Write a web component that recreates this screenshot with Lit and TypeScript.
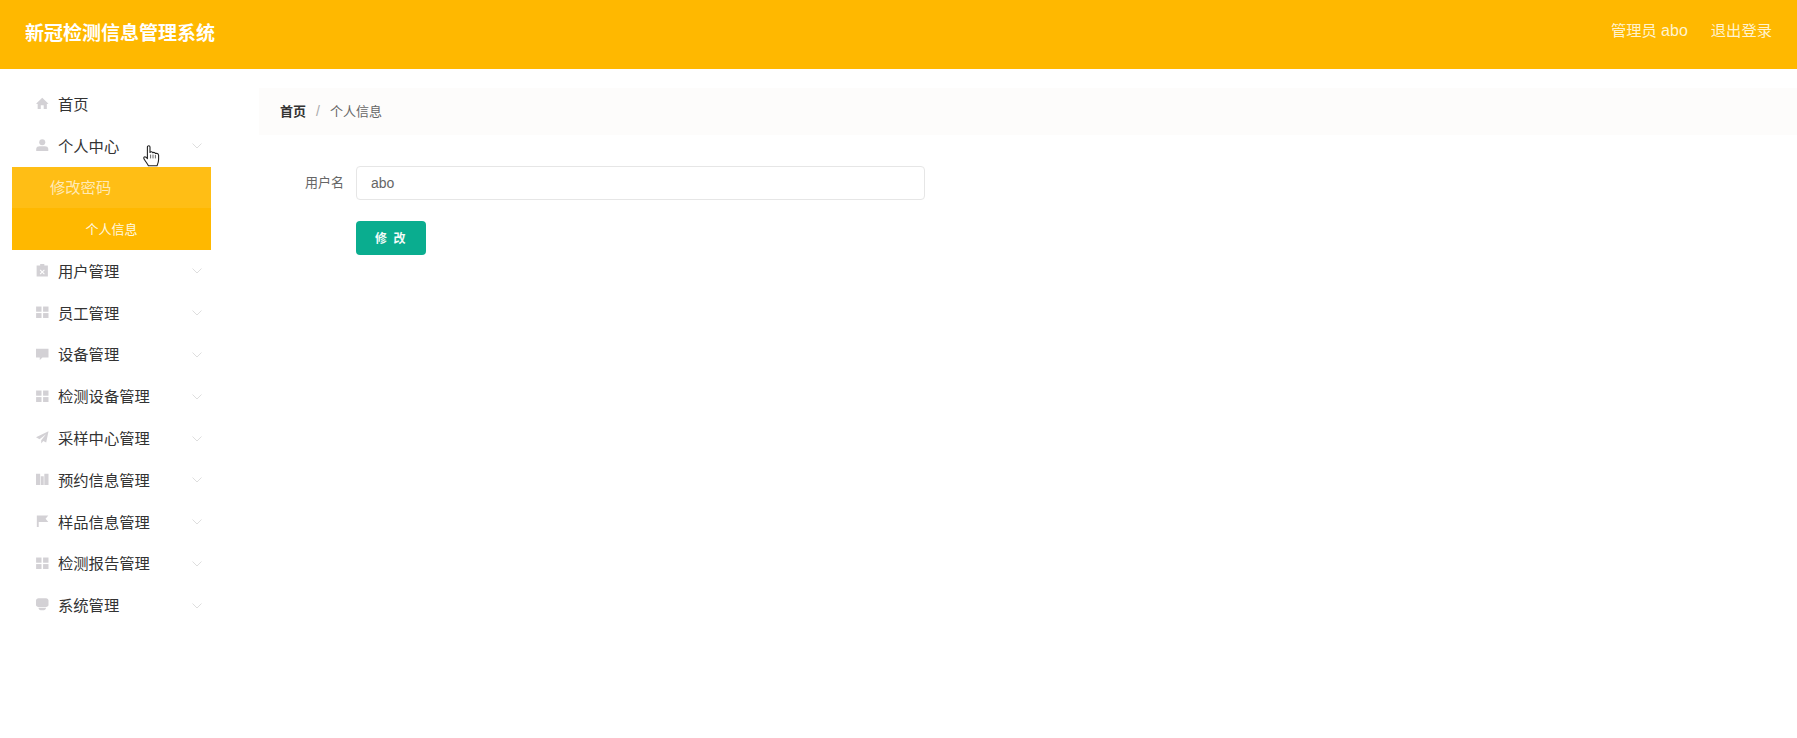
import { LitElement, html, css, svg } from "lit";
import { customElement } from "lit/decorators.js";

const icons: Record<string, unknown> = {
  home: svg`<path d="M6 .6 0 6.4 1.6 6.6V11.6H4.6V7.8H7.4V11.6H10.4V6.6L12 6.4Z"/>`,
  user: svg`<circle cx="6" cy="3.2" r="2.9"/><path d="M.2 11.8V9.6C.2 7.6 2 6.9 3.4 6.9H8.6C10 6.9 11.8 7.6 11.8 9.6V11.8Z"/>`,
  clip: svg`<path fill-rule="evenodd" d="M4 0H8V1.5H11.4V12H.6V1.5H4ZM4.3 5.2 3.6 5.9 5.3 7.6 3.6 9.3 4.3 10 6 8.3 7.7 10 8.4 9.3 6.7 7.6 8.4 5.9 7.7 5.2 6 6.9Z"/>`,
  grid: svg`<rect x=".1" y=".5" width="5.2" height="5"/><rect x="6.8" y=".5" width="5.2" height="5"/><rect x=".1" y="6.8" width="5.2" height="5"/><rect x="6.8" y="6.8" width="5.2" height="5"/>`,
  chat: svg`<path d="M0 .8H12V9H6.2L3.6 11.6V9H0Z"/>`,
  send: svg`<path d="M12 .2 0 6 3.4 7.8 9.6 3 5 8.8V12L7 9.6 9.8 11Z"/>`,
  chart: svg`<path d="M0 .6H4V11.6H0ZM4.6 3H7.4V11.6H4.6ZM8 .6H12V11.6H8Z"/>`,
  flag: svg`<path d="M.8 .4H11.8L9.2 3.6 11.8 6.8H2.6V12H.8Z"/>`,
  server: svg`<path d="M2.4 .2H9.6C11 .2 12 1.2 12 2.4V6.8C12 7.8 11 8.6 9.6 8.6H2.4C1 8.6 0 7.8 0 6.8V2.4C0 1.2 1 .2 2.4 .2ZM2.4 9.4H9.6C9.6 10.8 8.6 11.8 7.4 11.8H4.6C3.4 11.8 2.4 10.8 2.4 9.4Z"/>`,
};

const menu: [string, string, boolean][] = [
  ["home", "首页", false],
  ["user", "个人中心", true],
];
const rest: [string, string, boolean][] = [
  ["clip", "用户管理", true],
  ["grid", "员工管理", true],
  ["chat", "设备管理", true],
  ["grid", "检测设备管理", true],
  ["send", "采样中心管理", true],
  ["chart", "预约信息管理", true],
  ["flag", "样品信息管理", true],
  ["grid", "检测报告管理", true],
  ["server", "系统管理", true],
];

@customElement("app-root")
export class AppRoot extends LitElement {
  static styles = css`
    :host {
      display: block;
      position: relative;
      height: 738px;
      overflow: hidden;
      background: #fff;
      font-family: "Liberation Sans", "Noto Sans CJK SC", sans-serif;
      color: #333;
    }
    .header {
      height: 69px;
      box-sizing: border-box;
      padding: 0 25px 7px;
      background: #ffb800;
      display: flex;
      align-items: center;
      justify-content: space-between;
      color: #fff;
    }
    .title { font-size: 19px; font-weight: 700; }
    .right { display: flex; gap: 23px; font-size: 15.3px; color: #fff3cf; padding-bottom: 5px; }
    .abo { font-size: 16px; }
    .body { display: flex; }
    .side { width: 259px; flex: none; padding-top: 14px; }
    .item {
      width: 212px;
      height: 41.8px;
      box-sizing: border-box;
      padding: 0 0 2px 36px;
      display: flex;
      align-items: center;
      font-size: 15.3px;
      color: #333;
    }
    .ico { width: 12.5px; height: 12.5px; fill: #d3d1d5; flex: none; margin: 1px 9.5px 0 0; }
    .chev {
      width: 10px; height: 6px; margin: 3px 10px 0 auto;
      fill: none; stroke: #dedede; stroke-width: 1;
    }
    .sub { margin-left: 12px; width: 199px; background: #ffb800; }
    .sub div { height: 41.7px; box-sizing: border-box; padding-bottom: 2px; display: flex; align-items: center; }
    .sub .s1 { background: #ffbe15; padding-left: 38px; font-size: 15.3px; color: rgba(255,255,255,.7); }
    .sub .s2 { justify-content: center; font-size: 13px; color: #fff8e0; }
    .main { flex: 1; padding-top: 19px; min-width: 0; }
    .crumb {
      height: 47px; box-sizing: border-box; padding: 0 0 2px 21px;
      background: #fdfcfb; display: flex; align-items: center;
      font-size: 13px; color: #666;
    }
    .crumb b { color: #333; }
    .crumb i { font-style: normal; color: #aaa; margin: 0 10px; font-size: 14px; }
    .row { display: flex; align-items: center; margin-top: 31px; }
    .row label { width: 85px; text-align: right; margin: 0 12px 3px 0; font-size: 13px; color: #666; }
    .input {
      width: 569px; height: 34px; box-sizing: border-box;
      border: 1px solid #e6e6e6; border-radius: 4px;
      padding-left: 14px; display: flex; align-items: center;
      font-size: 14px; color: #666;
    }
    .btn {
      margin: 21px 0 0 97px; width: 70px; height: 34px; border-radius: 4px;
      background: #0aad8f; color: #f4fbf9; font-size: 12px; font-weight: 700;
      display: flex; align-items: center; justify-content: center;
      letter-spacing: 1.5px; box-sizing: border-box; padding-bottom: 1px;
    }
    .cursor { position: absolute; left: 143px; top: 145px; width: 18px; height: 22px; }
  `;

  private row(r: [string, string, boolean]) {
    return html`<div class="item">
      <svg class="ico" viewBox="0 0 12 12">${icons[r[0]]}</svg>
      <span>${r[1]}</span>
      ${r[2] ? html`<svg class="chev" viewBox="0 0 10 6"><path d="M.5.5 5 5 9.5.5"/></svg>` : ""}
    </div>`;
  }

  render() {
    return html`
      <div class="header">
        <div class="title">新冠检测信息管理系统</div>
        <div class="right"><span>管理员 <span class="abo">abo</span></span><span>退出登录</span></div>
      </div>
      <div class="body">
        <div class="side">
          ${menu.map((r) => this.row(r))}
          <div class="sub">
            <div class="s1">修改密码</div>
            <div class="s2">个人信息</div>
          </div>
          ${rest.map((r) => this.row(r))}
        </div>
        <div class="main">
          <div class="crumb"><b>首页</b><i>/</i><span>个人信息</span></div>
          <div class="row"><label>用户名</label><div class="input">abo</div></div>
          <div class="btn">修 改</div>
        </div>
      </div>
      <svg class="cursor" viewBox="0 0 18 22">
        <path d="M4.4 2C4.4.4 7 .4 7 2V7.4C7.8 6.4 9.4 6.6 9.8 7.8 10.6 7 12.2 7.4 12.4 8.6 13.4 8 15.4 8.6 15.6 10.2V14.4C15.6 17 14.6 19 14 20.8H5.4C4.6 19 2.6 16.6 1.2 14.2 .2 12.4 1.4 11 3 12.2L4.4 13.6Z" fill="#fff" stroke="#222" stroke-width="1.1" stroke-linejoin="round"/>
        <path d="M7.6 9.6V13.4M10 9.6V13.4M12.4 10V13.4" stroke="#444" stroke-width=".8" fill="none"/>
      </svg>
    `;
  }
}
